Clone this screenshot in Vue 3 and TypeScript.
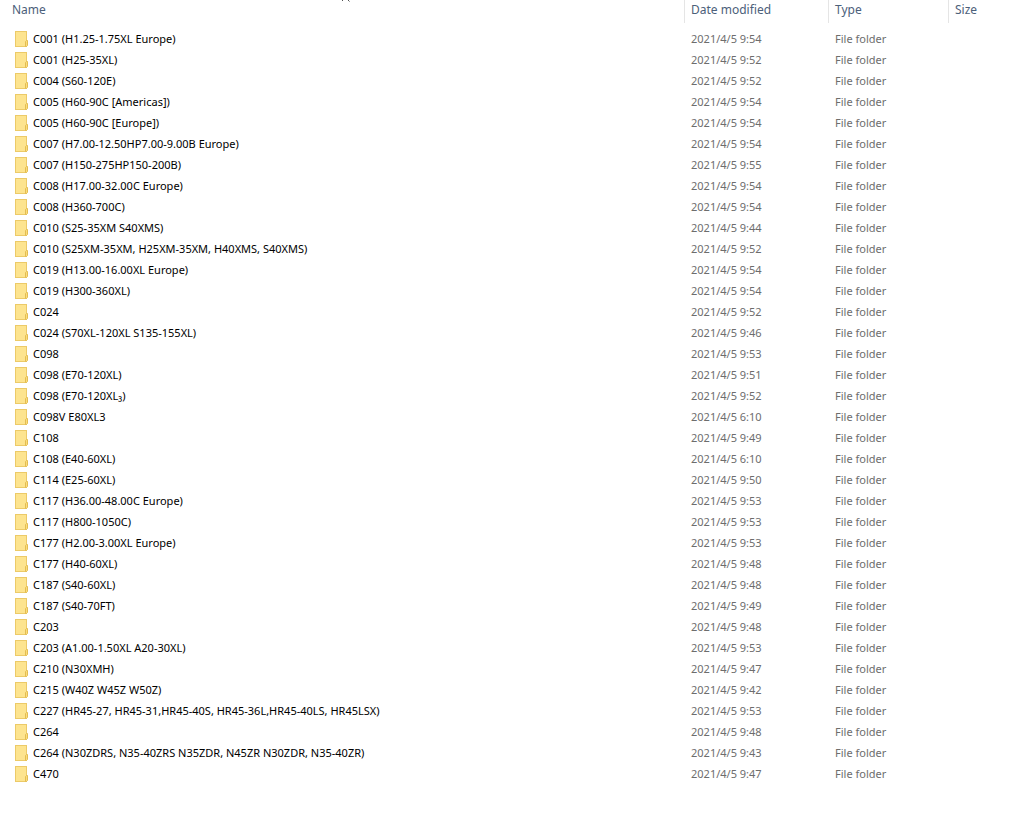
<script setup lang="ts">
interface Folder {
  name: string
  time: string
}

const folders: Folder[] = [
  { name: 'C001 (H1.25-1.75XL Europe)', time: '9:54' },
  { name: 'C001 (H25-35XL)', time: '9:52' },
  { name: 'C004 (S60-120E)', time: '9:52' },
  { name: 'C005 (H60-90C [Americas])', time: '9:54' },
  { name: 'C005 (H60-90C [Europe])', time: '9:54' },
  { name: 'C007 (H7.00-12.50HP7.00-9.00B Europe)', time: '9:54' },
  { name: 'C007 (H150-275HP150-200B)', time: '9:55' },
  { name: 'C008 (H17.00-32.00C Europe)', time: '9:54' },
  { name: 'C008 (H360-700C)', time: '9:54' },
  { name: 'C010 (S25-35XM S40XMS)', time: '9:44' },
  { name: 'C010 (S25XM-35XM, H25XM-35XM, H40XMS, S40XMS)', time: '9:52' },
  { name: 'C019 (H13.00-16.00XL Europe)', time: '9:54' },
  { name: 'C019 (H300-360XL)', time: '9:54' },
  { name: 'C024', time: '9:52' },
  { name: 'C024 (S70XL-120XL S135-155XL)', time: '9:46' },
  { name: 'C098', time: '9:53' },
  { name: 'C098 (E70-120XL)', time: '9:51' },
  { name: 'C098 (E70-120XL₃)', time: '9:52' },
  { name: 'C098V E80XL3', time: '6:10' },
  { name: 'C108', time: '9:49' },
  { name: 'C108 (E40-60XL)', time: '6:10' },
  { name: 'C114 (E25-60XL)', time: '9:50' },
  { name: 'C117 (H36.00-48.00C Europe)', time: '9:53' },
  { name: 'C117 (H800-1050C)', time: '9:53' },
  { name: 'C177 (H2.00-3.00XL Europe)', time: '9:53' },
  { name: 'C177 (H40-60XL)', time: '9:48' },
  { name: 'C187 (S40-60XL)', time: '9:48' },
  { name: 'C187 (S40-70FT)', time: '9:49' },
  { name: 'C203', time: '9:48' },
  { name: 'C203 (A1.00-1.50XL A20-30XL)', time: '9:53' },
  { name: 'C210 (N30XMH)', time: '9:47' },
  { name: 'C215 (W40Z W45Z W50Z)', time: '9:42' },
  { name: 'C227 (HR45-27, HR45-31,HR45-40S, HR45-36L,HR45-40LS, HR45LSX)', time: '9:53' },
  { name: 'C264', time: '9:48' },
  { name: 'C264 (N30ZDRS, N35-40ZRS N35ZDR, N45ZR N30ZDR, N35-40ZR)', time: '9:43' },
  { name: 'C470', time: '9:47' },
]
</script>

<template>
  <table class="files">
    <colgroup>
      <col />
      <col class="col-date" />
      <col class="col-type" />
      <col class="col-size" />
    </colgroup>
    <thead>
      <tr>
        <th scope="col" aria-sort="ascending">
          <div class="head head-name">
            Name
            <svg class="sort" width="9" height="4" viewBox="0 0 9 4" aria-hidden="true">
              <path d="M-0.5 1.5 L3.5 -2.5 L7.5 1.5" fill="none" stroke="#555" />
            </svg>
          </div>
        </th>
        <th scope="col"><div class="head">Date modified</div></th>
        <th scope="col"><div class="head">Type</div></th>
        <th scope="col"><div class="head">Size</div></th>
      </tr>
    </thead>
    <tbody>
      <tr v-for="folder in folders" :key="folder.name">
        <td>
          <div class="name">
            <svg class="icon" width="14" height="16" viewBox="0 0 14 16" aria-hidden="true">
              <rect x="0.5" y="0.5" width="11" height="15" fill="#fde48f" stroke="#ecca68" />
              <path d="M10.5 15.5 V10.5 L11.5 9.5 H12.5 V14.5 L11.5 15.5 Z" fill="#fbdc7c" stroke="#e3bd52" />
            </svg>
            <span>{{ folder.name }}</span>
          </div>
        </td>
        <td class="meta">2021/4/5 {{ folder.time }}</td>
        <td class="meta">File folder</td>
        <td class="meta"></td>
      </tr>
    </tbody>
  </table>
</template>

<style>
body {
  margin: 0;
  background: #fff;
}
</style>

<style scoped>
.files {
  width: 100%;
  table-layout: fixed;
  border-collapse: collapse;
  font-family: "Segoe UI", "Noto Sans", "Open Sans", sans-serif;
  font-size: 12px;
  line-height: 20px;
  color: #000;
  white-space: nowrap;
}

.col-date {
  width: 144px;
}

.col-type {
  width: 120px;
}

.col-size {
  width: 69px;
}

th {
  height: 28px;
  padding: 0;
  font-weight: 400;
  text-align: left;
  vertical-align: top;
  color: #4c607a;
}

.head {
  height: 23px;
  padding-left: 6px;
  border-left: 1px solid #e5e5e5;
}

.head-name {
  position: relative;
  padding-left: 12px;
  border-left: 0;
}

.sort {
  position: absolute;
  top: 0;
  left: 50%;
}

td {
  height: 21px;
  padding: 0;
  font-size: 11px;
}

.name {
  display: flex;
  align-items: center;
  gap: 4px;
  padding-left: 15px;
}

.icon {
  flex: none;
}

.meta {
  padding-left: 7px;
  color: #6d6d6d;
}
</style>
